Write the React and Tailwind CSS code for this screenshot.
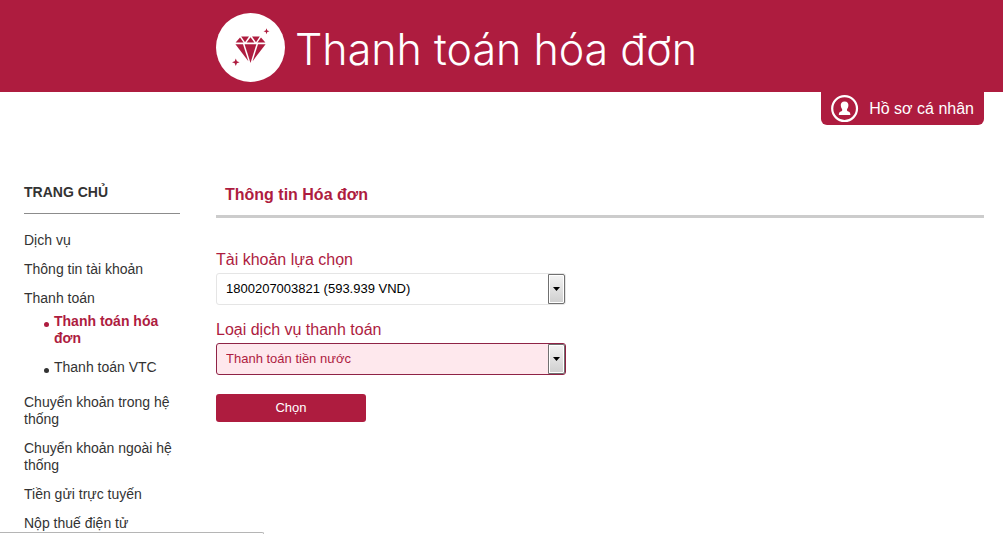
import React, { useState } from 'react';

const menuItems = [
  { label: 'Dịch vụ' },
  { label: 'Thông tin tài khoản' },
  {
    label: 'Thanh toán',
    children: [
      { label: 'Thanh toán hóa đơn', active: true },
      { label: 'Thanh toán VTC' },
    ],
  },
  { label: 'Chuyển khoản trong hệ thống' },
  { label: 'Chuyển khoản ngoài hệ thống' },
  { label: 'Tiền gửi trực tuyến' },
  { label: 'Nộp thuế điện tử' },
];

function DiamondLogo() {
  return (
    <svg viewBox="0 0 69 69" className="h-[69px] w-[69px] shrink-0" aria-hidden="true">
      <circle cx="34.5" cy="34.5" r="34.5" fill="#fff" />
      <g fill="#ae1c3f">
        <path d="M24 24.4 L27.6 29.6 H19.6 Z" />
        <path d="M25.2 23.6 H33 L29 29.2 Z" />
        <path d="M34.5 24.2 L38.4 29.6 H30.6 Z" />
        <path d="M36 23.6 H43.8 L40 29.2 Z" />
        <path d="M45 24.4 L49.4 29.6 H41.4 Z" />
        <path d="M19.4 31.2 H27 L32.4 48.2 Z" />
        <path d="M28.6 31.2 H40.4 L34.5 50 Z" />
        <path d="M42 31.2 H49.6 L36.6 48.2 Z" />
        <path d="M50.5 15.2 L51.3 17.4 L53.5 18.2 L51.3 19 L50.5 21.2 L49.7 19 L47.5 18.2 L49.7 17.4 Z" />
        <path d="M19.8 45.4 L20.9 48.2 L23.6 49.2 L20.9 50.2 L19.8 53 L18.7 50.2 L16 49.2 L18.7 48.2 Z" />
      </g>
    </svg>
  );
}

function ProfileIcon() {
  return (
    <svg viewBox="0 0 28 28" className="h-7 w-7 shrink-0" aria-hidden="true">
      <circle cx="13.6" cy="13.6" r="12.4" fill="none" stroke="#fff" strokeWidth="2.2" />
      <path
        fill="#fff"
        d="M13.6 6.4 C10.8 6.4 9.6 8.2 9.8 10.6 C9.9 12.4 10.6 13.6 11.2 14.4 C11.4 15.6 10.9 16 9.8 16.4 C8.2 17 7.9 18 7.8 20 H19.4 C19.3 18 19 17 17.4 16.4 C16.3 16 15.8 15.6 16 14.4 C16.6 13.6 17.3 12.4 17.4 10.6 C17.6 8.2 16.4 6.4 13.6 6.4 Z"
      />
    </svg>
  );
}

function SelectArrow() {
  return (
    <span className="pointer-events-none absolute top-px right-px bottom-px flex w-[17px] items-center justify-center rounded-r-xs border border-[#707070] bg-linear-to-b from-[#f3f3f3] to-[#cfcfcf] inset-ring inset-ring-white">
      <svg viewBox="0 0 7 4" className="h-1 w-[7px]" aria-hidden="true">
        <path d="M0 0 H7 L3.5 4 Z" fill="#000" />
      </svg>
    </span>
  );
}

function Sidebar() {
  return (
    <nav className="w-[156px] shrink-0 text-sm leading-[17px] text-[#333]">
      <h2 className="border-b border-[#8c8c8c] pb-3 font-bold">
        <a href="#home">TRANG CHỦ</a>
      </h2>
      <ul className="mt-[18px] flex flex-col gap-3">
        {menuItems.map((item) => (
          <li key={item.label}>
            <a href="#menu" className="block">{item.label}</a>
            {item.children && (
              <ul className="mt-1.5 mb-1.5 flex flex-col gap-3 pl-5">
                {item.children.map((child) => (
                  <li
                    key={child.label}
                    className={`flex gap-[5px] ${child.active ? 'font-bold text-[#ae1c3f]' : ''}`}
                  >
                    <span className="mt-[9px] h-[5px] w-[5px] shrink-0 rounded-full bg-current" />
                    <a href="#submenu">{child.label}</a>
                  </li>
                ))}
              </ul>
            )}
          </li>
        ))}
      </ul>
    </nav>
  );
}

function App() {
  const [account, setAccount] = useState('1800207003821');
  const [service, setService] = useState('water');

  return (
    <div className="bg-white font-['Liberation_Sans',Arial,sans-serif]">
      <header className="flex h-[92px] items-center gap-2.5 bg-[#ae1c3f] pt-0.5 pl-[216px]">
        <DiamondLogo />
        <h1 className="pt-1 font-[Inter,'Liberation_Sans',sans-serif] text-[43px] leading-[56px] font-light text-white">
          Thanh toán hóa đơn
        </h1>
      </header>

      <div className="flex justify-end pr-[19px]">
        <a
          href="#profile"
          className="flex h-[33px] items-center gap-2.5 rounded-b-md bg-[#ae1c3f] px-2.5 text-base text-white"
        >
          <ProfileIcon />
          Hồ sơ cá nhân
        </a>
      </div>

      <div className="flex gap-9 pt-[59px] pr-[19px] pl-6">
        <Sidebar />

        <main className="min-w-0 flex-1">
          <h2 className="border-b-3 border-[#ccc] pt-0.5 pb-3 pl-[9px] text-base leading-[17px] font-bold text-[#ae1c3f]">
            Thông tin Hóa đơn
          </h2>

          <form className="mt-8 max-w-[350px]" onSubmit={(e) => e.preventDefault()}>
            <label htmlFor="account" className="block text-base leading-[19px] text-[#ae1c3f]">
              Tài khoản lựa chọn
            </label>
            <div className="relative mt-1">
              <select
                id="account"
                value={account}
                onChange={(e) => setAccount(e.target.value)}
                className="h-8 w-full appearance-none rounded-[3px] border border-[#e5e5e5] bg-white px-[9px] text-[13px] text-black"
              >
                <option value="1800207003821">1800207003821 (593.939 VND)</option>
              </select>
              <SelectArrow />
            </div>

            <label htmlFor="service" className="mt-[15px] block text-base leading-[19px] text-[#ae1c3f]">
              Loại dịch vụ thanh toán
            </label>
            <div className="relative mt-1">
              <select
                id="service"
                value={service}
                onChange={(e) => setService(e.target.value)}
                className="h-8 w-full appearance-none rounded-[3px] border border-[#8f2346] bg-[#fee8ed] px-[9px] text-[13px] text-[#ae1c3f]"
              >
                <option value="water">Thanh toán tiền nước</option>
              </select>
              <SelectArrow />
            </div>

            <button
              type="submit"
              className="mt-[19px] h-7 w-[150px] rounded-[3px] bg-[#ae1c3f] text-[13px] text-white"
            >
              Chọn
            </button>
          </form>
        </main>
      </div>

      {/* Browser status bar edge */}
      <div className="fixed bottom-0 left-0 h-0.5 w-[264px] rounded-tr-xs border-t border-r border-[#b5b5b5] bg-white" />
    </div>
  );
}

export default App;
